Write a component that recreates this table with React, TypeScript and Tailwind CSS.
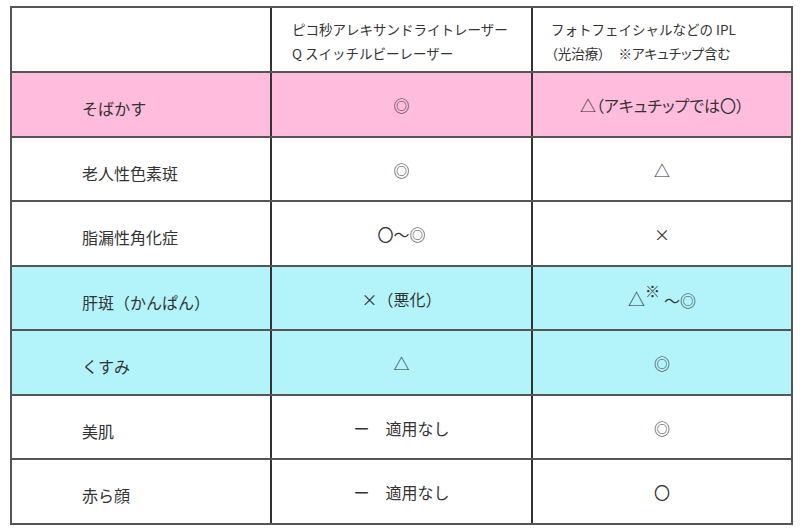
import React from "react";

const font = { fontFamily: '"Noto Sans CJK JP", "Noto Sans", sans-serif' };

type Row = { label: string; a: React.ReactNode; b: React.ReactNode; bg: string };

const rows: Row[] = [
  {
    label: "そばかす",
    a: "◎",
    b: <span className="[font-feature-settings:'palt']">△（アキュチップでは〇）</span>,
    bg: "bg-[#ffbcdc]",
  },
  { label: "老人性色素斑", a: "◎", b: "△", bg: "bg-white" },
  { label: "脂漏性角化症", a: "〇～◎", b: "×", bg: "bg-white" },
  {
    label: "肝斑（かんぱん）",
    a: "×（悪化）",
    b: (
      <span className="flex items-end">
        <span className="text-[17px] leading-[24px]">△</span>
        <span className="text-[15px] leading-[18px] relative -top-[11px]">※</span>
        <span className="ml-[4px] leading-[22px]">～◎</span>
      </span>
    ),
    bg: "bg-[#b3f4fb]",
  },
  { label: "くすみ", a: "△", b: "◎", bg: "bg-[#b3f4fb]" },
  { label: "美肌", a: "ー　適用なし", b: "◎", bg: "bg-white" },
  { label: "赤ら顔", a: "ー　適用なし", b: "〇", bg: "bg-white" },
];

export default function App() {
  return (
    <div className="w-[800px] h-[530px] bg-white text-[#333]" style={font}>
      <div className="pt-[6px] pl-[10px]">
        <div className="w-[783px] border-2 border-[#555]">
          <div className="grid grid-cols-[260px_261px_258px] h-[63px]">
            <div className="border-r-2 border-[#333]" />
            <div className="border-r-2 border-[#333] pl-[20px] flex flex-col justify-center text-[13.5px] leading-[24px] pt-[3px]">
              <div>ピコ秒アレキサンドライトレーザー</div>
              <div>Q スイッチルビーレーザー</div>
            </div>
            <div className="pl-[18px] flex flex-col justify-center text-[13.5px] leading-[24px] pt-[3px]">
              <div>フォトフェイシャルなどの IPL</div>
              <div className="[font-feature-settings:'palt']">（光治療）　※アキュチップ含む</div>
            </div>
          </div>
          {rows.map((r, i) => (
            <div
              key={i}
              className={`grid grid-cols-[260px_261px_258px] h-[64.5px] border-t-2 border-[#555] ${r.bg}`}
            >
              <div className="border-r-2 border-[#333] pl-[70px] flex items-center text-[16px] pt-[8px]">
                {r.label}
              </div>
              <div className="border-r-2 border-[#333] flex items-center justify-center text-[16px] pt-[2px]">
                {r.a}
              </div>
              <div className="flex items-center justify-center text-[16px] pt-[2px]">{r.b}</div>
            </div>
          ))}
        </div>
      </div>
    </div>
  );
}
